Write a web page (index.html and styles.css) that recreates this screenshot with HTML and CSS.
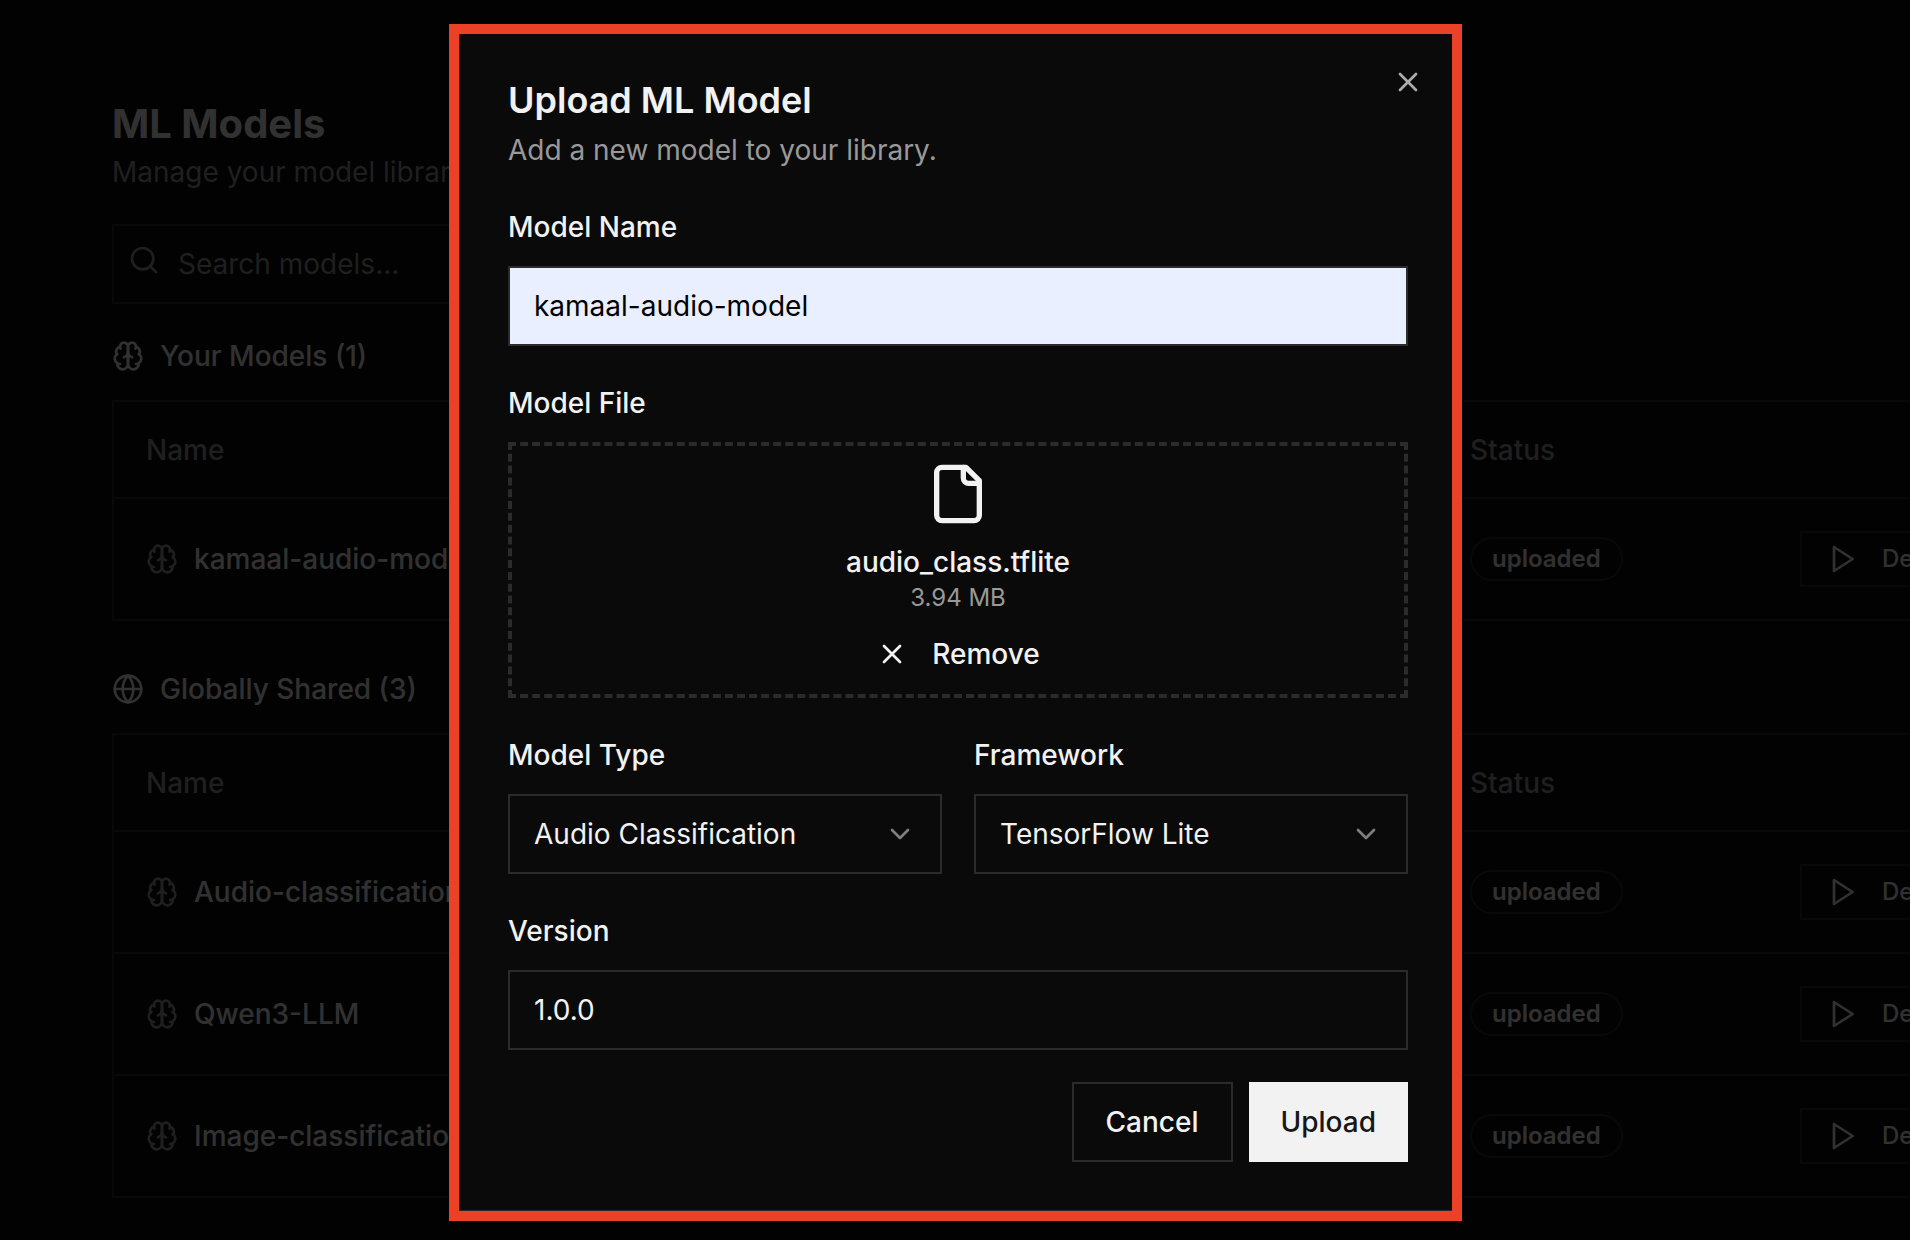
FILE: index.html
```html
<!DOCTYPE html>
<html lang="en">
<head>
<meta charset="utf-8">
<meta name="viewport" content="width=device-width, initial-scale=1">
<title>ML Models</title>
<link rel="stylesheet" href="styles.css">
</head>
<body>
<svg class="sprite" aria-hidden="true">
  <symbol id="brain" viewBox="0 0 24 24">
    <path d="M12 5a3 3 0 1 0-5.997.125 4 4 0 0 0-2.526 5.77 4 4 0 0 0 .556 6.588A4 4 0 1 0 12 18Z"/>
    <path d="M12 5a3 3 0 1 1 5.997.125 4 4 0 0 1 2.526 5.77 4 4 0 0 1-.556 6.588A4 4 0 1 1 12 18Z"/>
    <path d="M15 13a4.5 4.5 0 0 1-3-4 4.5 4.5 0 0 1-3 4"/>
    <path d="M17.599 6.5a3 3 0 0 0 .399-1.375M6.003 5.125A3 3 0 0 0 6.401 6.5M3.477 10.896a4 4 0 0 1 .585-.396M19.938 10.5a4 4 0 0 1 .585.396M6 18a4 4 0 0 1-1.967-.516M19.967 17.484A4 4 0 0 1 18 18"/>
  </symbol>
  <symbol id="globe" viewBox="0 0 24 24">
    <circle cx="12" cy="12" r="10"/>
    <path d="M12 2a14.5 14.5 0 0 0 0 20 14.5 14.5 0 0 0 0-20M2 12h20"/>
  </symbol>
  <symbol id="search" viewBox="0 0 24 24">
    <circle cx="11" cy="11" r="8"/><path d="m21 21-4.3-4.3"/>
  </symbol>
  <symbol id="play" viewBox="0 0 24 24"><path d="M6 3l14 9-14 9z"/></symbol>
  <symbol id="x" viewBox="0 0 24 24"><path d="M18 6 6 18M6 6l12 12"/></symbol>
  <symbol id="chevron" viewBox="0 0 24 24"><path d="m6 9 6 6 6-6"/></symbol>
  <symbol id="file" viewBox="0 0 24 24">
    <path d="M15 2H6a2 2 0 0 0-2 2v16a2 2 0 0 0 2 2h12a2 2 0 0 0 2-2V7Z"/>
    <path d="M14 2v4a2 2 0 0 0 2 2h4"/>
  </symbol>
</svg>

<main class="page">
  <h1 class="page-title">ML Models</h1>
  <p class="page-lead">Manage your model library</p>

  <div class="search">
    <svg class="icon search-icon"><use href="#search"/></svg>
    <input class="search-input" type="search" placeholder="Search models..." aria-label="Search models">
  </div>

  <section class="group">
    <h2 class="group-title"><svg class="icon"><use href="#brain"/></svg>Your Models (1)</h2>
    <div class="table-box">
      <table class="models">
        <colgroup><col><col class="col-status"><col class="col-actions"></colgroup>
        <thead><tr><th>Name</th><th>Status</th><th></th></tr></thead>
        <tbody>
          <tr>
            <td><div class="model"><svg class="icon muted"><use href="#brain"/></svg>kamaal-audio-model</div></td>
            <td><span class="badge">uploaded</span></td>
            <td><button class="deploy" type="button"><svg class="icon"><use href="#play"/></svg>Deploy</button></td>
          </tr>
        </tbody>
      </table>
    </div>
  </section>

  <section class="group group-shared">
    <h2 class="group-title"><svg class="icon"><use href="#globe"/></svg>Globally Shared (3)</h2>
    <div class="table-box">
      <table class="models">
        <colgroup><col><col class="col-status"><col class="col-actions"></colgroup>
        <thead><tr><th>Name</th><th>Status</th><th></th></tr></thead>
        <tbody>
          <tr>
            <td><div class="model"><svg class="icon muted"><use href="#brain"/></svg>Audio-classification</div></td>
            <td><span class="badge">uploaded</span></td>
            <td><button class="deploy" type="button"><svg class="icon"><use href="#play"/></svg>Deploy</button></td>
          </tr>
          <tr>
            <td><div class="model"><svg class="icon muted"><use href="#brain"/></svg>Qwen3-LLM</div></td>
            <td><span class="badge">uploaded</span></td>
            <td><button class="deploy" type="button"><svg class="icon"><use href="#play"/></svg>Deploy</button></td>
          </tr>
          <tr>
            <td><div class="model"><svg class="icon muted"><use href="#brain"/></svg>Image-classification</div></td>
            <td><span class="badge">uploaded</span></td>
            <td><button class="deploy" type="button"><svg class="icon"><use href="#play"/></svg>Deploy</button></td>
          </tr>
        </tbody>
      </table>
    </div>
  </section>
</main>

<div class="overlay">
  <div class="dialog" role="dialog" aria-modal="true" aria-labelledby="dialog-title">
    <button class="close" type="button" aria-label="Close"><svg class="icon"><use href="#x"/></svg></button>
    <form class="form">
      <header class="dialog-head">
        <h2 class="dialog-title" id="dialog-title">Upload ML Model</h2>
        <p class="dialog-lead">Add a new model to your library.</p>
      </header>

      <div class="field">
        <label class="label" for="name">Model Name</label>
        <input class="control autofilled" id="name" type="text" value="kamaal-audio-model">
      </div>

      <div class="field">
        <span class="label">Model File</span>
        <div class="dropzone">
          <svg class="icon file-icon"><use href="#file"/></svg>
          <div class="file-info">
            <p class="file-name">audio_class.tflite</p>
            <p class="file-size">3.94 MB</p>
          </div>
          <button class="remove" type="button"><svg class="icon"><use href="#x"/></svg>Remove</button>
        </div>
      </div>

      <div class="columns">
        <div class="field">
          <label class="label" for="type">Model Type</label>
          <div class="select">
            <select class="control" id="type"><option>Audio Classification</option></select>
            <svg class="icon chevron"><use href="#chevron"/></svg>
          </div>
        </div>
        <div class="field">
          <label class="label" for="framework">Framework</label>
          <div class="select">
            <select class="control" id="framework"><option>TensorFlow Lite</option></select>
            <svg class="icon chevron"><use href="#chevron"/></svg>
          </div>
        </div>
      </div>

      <div class="field">
        <label class="label" for="version">Version</label>
        <input class="control" id="version" type="text" value="1.0.0">
      </div>

      <div class="actions">
        <button class="button button-outline" type="button">Cancel</button>
        <button class="button button-primary" type="submit">Upload</button>
      </div>
    </form>
  </div>
</div>
</body>
</html>
```

FILE: styles.css
```css
:root {
  --bg: #0a0a0a;
  --fg: #f2f2f2;
  --muted: #999999;
  --line: #2b2b2b;
}

* { box-sizing: border-box; }

body {
  margin: 0;
  overflow: hidden;
  background: var(--bg);
  color: var(--fg);
  font-family: Inter, "Liberation Sans", sans-serif;
  font-size: 28px;
  line-height: 40px;
}

h1, h2, p { margin: 0; }

button, input, select {
  font: inherit;
  color: inherit;
  background: transparent;
  border: 0;
  border-radius: 0;
  padding: 0;
  margin: 0;
}

.sprite { display: none; }

.icon {
  flex: none;
  width: 32px;
  height: 32px;
  fill: none;
  stroke: currentColor;
  stroke-width: 2;
  stroke-linecap: round;
  stroke-linejoin: round;
}

.muted { color: var(--muted); }

/* Models page */

.page {
  min-height: 100vh;
  padding: 96px 0 40px 112px;
  overflow: hidden;
}

.page-title {
  font-size: 40px;
  line-height: 56px;
  font-weight: 700;
}

.page-lead { color: var(--muted); }

.search {
  display: flex;
  align-items: flex-start;
  gap: 18px;
  max-width: 896px;
  height: 80px;
  margin-top: 32px;
  padding-left: 14px;
  border: 2px solid var(--line);
  color: var(--muted);
}

.search-icon { margin-top: 18px; }

.search-input {
  flex: 1;
  height: 76px;
  outline: 0;
}

.search-input::placeholder { color: var(--muted); opacity: 1; }

.group { margin-top: 32px; }
.group-shared { margin-top: 48px; }

.group-title {
  display: flex;
  align-items: center;
  gap: 16px;
  margin-bottom: 24px;
  font-size: 28px;
  font-weight: 500;
}

/* The table is wider than the window and runs off its right edge. */
.table-box {
  margin-right: -200px;
  border: 2px solid var(--line);
}

.models {
  width: 100%;
  table-layout: fixed;
  border-collapse: separate;
  border-spacing: 0;
}

.col-status { width: 330px; }
.col-actions { width: 340px; }

.models th {
  height: 97px;
  padding: 0 32px;
  border-bottom: 2px solid var(--line);
  color: var(--muted);
  font-weight: 500;
  text-align: left;
}

.models td {
  height: 122px;
  padding: 0 32px;
  border-bottom: 2px solid var(--line);
  font-weight: 500;
}

.models tr:last-child td {
  height: 120px;
  border-bottom: 0;
}

.model {
  display: flex;
  align-items: center;
  gap: 16px;
}

.badge {
  display: block;
  width: fit-content;
  padding: 4px 20px;
  border: 2px solid var(--line);
  border-radius: 22px;
  font-size: 24px;
  line-height: 32px;
  font-weight: 600;
}

.deploy {
  display: flex;
  align-items: center;
  gap: 24px;
  height: 56px;
  padding: 0 24px;
  border: 2px solid var(--line);
  font-size: 24px;
  font-weight: 500;
}

/* Upload dialog */

.overlay {
  position: fixed;
  inset: 0;
  overflow: auto;
  padding: 24px 16px 0 17px;
  background: rgba(0, 0, 0, 0.8);
}

.dialog {
  position: relative;
  max-width: 1013px;
  margin: 0 auto;
  border: 10px solid #ea4127;
  background: var(--bg);
}

.close {
  position: absolute;
  top: 32px;
  right: 28px;
  display: flex;
  opacity: 0.7;
}

.form {
  display: flex;
  flex-direction: column;
  gap: 32px;
  padding: 48px 44px 48px 48px;
  border: solid var(--line);
  border-width: 0 0 1px 1px;
}

.dialog-title {
  margin-bottom: 12px;
  font-size: 36px;
  line-height: 36px;
  font-weight: 600;
}

.dialog-lead { color: var(--muted); }

.field {
  display: flex;
  flex-direction: column;
  gap: 14px;
}

.label {
  line-height: 50px;
  font-weight: 500;
}

.control {
  width: 100%;
  height: 80px;
  padding: 0 24px;
  border: 2px solid var(--line);
  outline: 0;
}

.autofilled {
  background: #e9effe;
  color: #000000;
}

.dropzone {
  display: flex;
  flex-direction: column;
  align-items: center;
  gap: 16px;
  padding: 16px;
  border: 4px dashed var(--line);
}

.file-icon {
  width: 64px;
  height: 64px;
}

.file-info { text-align: center; }
.file-name { font-weight: 500; }

.file-size {
  color: var(--muted);
  font-size: 24px;
  line-height: 32px;
}

.remove {
  display: flex;
  align-items: center;
  gap: 24px;
  height: 48px;
  font-weight: 500;
}

.columns {
  display: grid;
  grid-template-columns: 1fr 1fr;
  gap: 32px;
}

.select {
  display: grid;
  align-items: center;
}

.select .control {
  grid-area: 1 / 1;
  appearance: none;
}

.chevron {
  grid-area: 1 / 1;
  justify-self: end;
  margin-right: 26px;
  opacity: 0.5;
  pointer-events: none;
}

.actions {
  display: flex;
  justify-content: flex-end;
  gap: 16px;
}

.button {
  height: 80px;
  padding: 0 32px;
  font-weight: 500;
}

.button-outline { border: 2px solid var(--line); }

.button-primary {
  background: var(--fg);
  color: #171717;
}
```
